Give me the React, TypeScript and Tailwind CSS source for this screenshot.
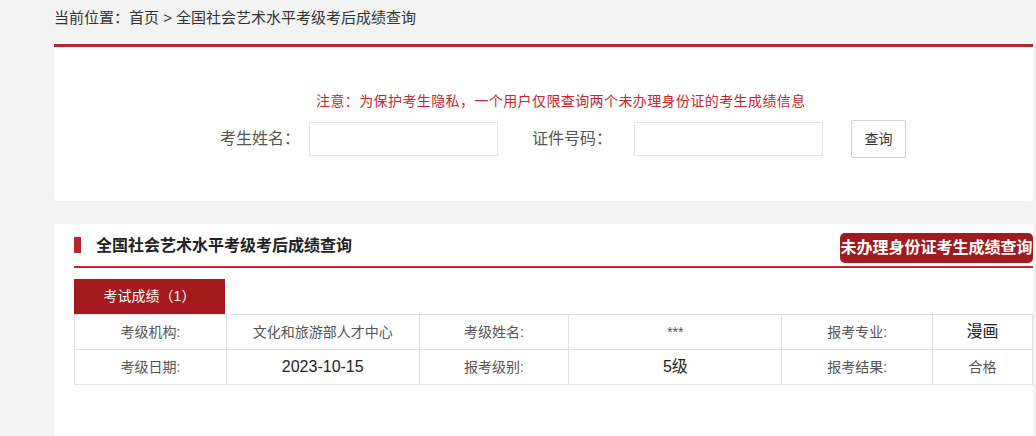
const font = {
  fontFamily: '"Liberation Sans", "Noto Sans CJK SC", "Noto Sans", sans-serif',
};

const rows = [
  [
    { text: "考级机构:", kind: "label" },
    { text: "文化和旅游部人才中心", kind: "value" },
    { text: "考级姓名:", kind: "label" },
    { text: "***", kind: "value" },
    { text: "报考专业:", kind: "label" },
    { text: "漫画", kind: "big" },
  ],
  [
    { text: "考级日期:", kind: "label" },
    { text: "2023-10-15", kind: "big" },
    { text: "报考级别:", kind: "label" },
    { text: "5级", kind: "big" },
    { text: "报考结果:", kind: "label" },
    { text: "合格", kind: "value" },
  ],
];

const colWidths = ["w-[152px]", "w-[193px]", "w-[150px]", "w-[213px]", "w-[151px]", "w-[100px]"];

function cellClass(kind: string) {
  if (kind === "label") return "text-[14px] text-[#555]";
  if (kind === "big") return "text-[16px] text-[#222]";
  return "text-[14px] text-[#555]";
}

export default function App() {
  return (
    <div
      className="w-[1036px] h-[436px] overflow-hidden bg-[#f3f3f3] pl-[54px] pr-[3px]"
      style={font}
    >
      {/* Breadcrumb */}
      <div className="h-[44px] pt-[9px] text-[15px] leading-[18px] text-[#333]">
        当前位置：首页 &gt; 全国社会艺术水平考级考后成绩查询
      </div>
      <div className="h-[3px] bg-[#b02a30]" />

      {/* Search form */}
      <div className="h-[154px] bg-white pt-[44px] rounded-b-[4px]">
        <p className="pl-[262px] text-[14px] leading-[20px] tracking-[0.4px] text-[#c8262d]">
          注意：为保护考生隐私，一个用户仅限查询两个未办理身份证的考生成绩信息
        </p>
        <div className="mt-[9px] flex h-[38px] items-center pl-[166px]">
          <span className="w-[80px] text-[16px] text-[#555]">考生姓名：</span>
          <input className="ml-[9px] h-[34px] w-[189px] border border-[#e4e4e4] bg-white outline-none" />
          <span className="ml-[34px] w-[80px] text-[16px] text-[#555]">证件号码：</span>
          <input className="ml-[22px] h-[34px] w-[189px] border border-[#e4e4e4] bg-white outline-none" />
          <button className="ml-[28px] h-[38px] w-[55px] rounded-[2px] border border-[#cfcfcf] bg-white text-[14px] text-[#333]">
            查询
          </button>
        </div>
      </div>

      {/* Results */}
      <div className="mt-[23px] h-[212px] bg-white pl-[20px]">
        <div className="flex h-[42px] items-start pt-[9px]">
          <div className="mt-[4px] h-[16px] w-[7px] bg-[#b8252b]" />
          <h2 className="ml-[15px] mt-[1px] text-[16px] font-bold leading-[24px] text-[#222]">
            全国社会艺术水平考级考后成绩查询
          </h2>
          <button className="ml-auto h-[30px] w-[193px] rounded-[5px] bg-[#a01b1f] text-[16px] font-bold leading-[30px] text-white">
            未办理身份证考生成绩查询
          </button>
        </div>
        <div className="h-[2px] bg-[#c4282e]" />

        <div className="mt-[11px] flex h-[35px] w-[151px] items-center justify-center bg-[#a51a1d] text-[14px] text-white">
          考试成绩（1）
        </div>

        <table className="table-fixed border-collapse">
          <tbody>
            {rows.map((row, i) => (
              <tr key={i} className="h-[35px]">
                {row.map((cell, j) => (
                  <td
                    key={j}
                    className={`${colWidths[j]} border border-[#e2e2e2] p-0 text-center leading-[20px] ${cellClass(cell.kind)}`}
                  >
                    {cell.text}
                  </td>
                ))}
              </tr>
            ))}
          </tbody>
        </table>
      </div>
    </div>
  );
}
